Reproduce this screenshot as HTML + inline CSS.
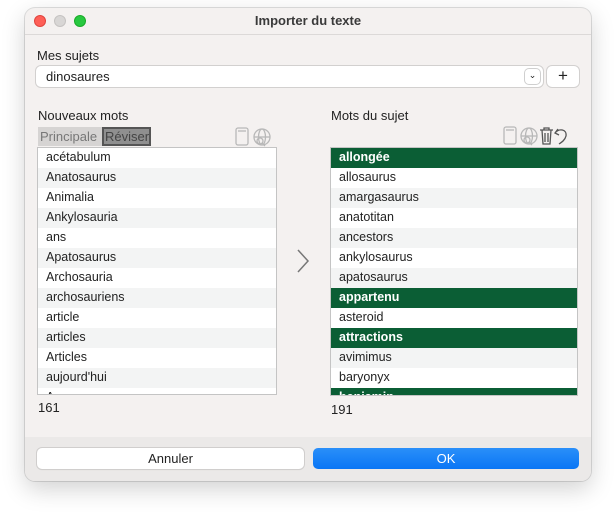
<!DOCTYPE html>
<html><head><meta charset="utf-8"><style>
*{box-sizing:border-box;margin:0;padding:0}
body{width:616px;height:524px;background:#fff;font-family:"Liberation Sans",sans-serif;font-size:12.5px;color:#222;position:relative;overflow:hidden}
.win{position:absolute;left:25px;top:8px;width:566px;height:473px;background:#f4f1f0;border-radius:10px;box-shadow:0 8px 24px rgba(0,0,0,.18),0 0 0 1px rgba(0,0,0,.12);overflow:hidden}
.title{position:absolute;left:0;top:0;width:100%;height:27px;border-bottom:1px solid #dcd9d8;text-align:center;line-height:25px;font-weight:bold;font-size:13px;color:#3a3a3a}
.dot{position:absolute;top:7px;width:12px;height:12px;border-radius:50%}
.abs{position:absolute}
.list{position:absolute;background:#fff;border:1px solid #c4c4c4;overflow:hidden}
.row{height:20px;line-height:19px;padding-left:8px;white-space:nowrap}
.g{background:#f3f4f4}
.s{background:#0b5e35;color:#fff;font-weight:bold}
.foot{position:absolute;left:0;top:429px;width:100%;height:44px;background:#ebe9e8}
.btn{position:absolute;top:11px;height:21px;border-radius:5px;text-align:center;line-height:21px;font-size:13px}
</style></head><body>
<div class="win">
 <div class="title">Importer du texte</div>
 <div class="dot" style="left:9px;background:#fe5f57;border:1px solid #e0443e"></div>
 <div class="dot" style="left:29px;background:#d8d6d5;border:1px solid #c5c3c2"></div>
 <div class="dot" style="left:49px;background:#28c840;border:1px solid #1aab29"></div>

 <div class="abs" style="left:12px;top:40px;font-size:13px">Mes sujets</div>
 <div class="abs" style="left:11px;top:58px;width:507px;height:21px;background:#fff;border-radius:5px;box-shadow:0 0 0 1px #d2d0cf;padding-left:10px;line-height:21px;font-size:13px">dinosaures
  <div class="abs" style="right:3px;top:3px;width:15px;height:15px;border-radius:4px;box-shadow:0 0 0 1px #cfcfcf;text-align:center;line-height:13px;font-size:9px">&#8964;</div></div>
 <div class="abs" style="left:522px;top:58px;width:32px;height:21px;background:#fff;border-radius:5px;box-shadow:0 0 0 1px #d2d0cf;text-align:center;line-height:20px;font-size:17px">+</div>

 <div class="abs" style="left:13px;top:100px;font-size:13px">Nouveaux mots</div>
 <div class="abs" style="left:13px;top:119px;width:113px;height:19px;background:#d6d4d3"></div>
 <div class="abs" style="left:15px;top:121px;color:#777;font-size:13px">Principale</div>
 <div class="abs" style="left:77px;top:119px;width:49px;height:19px;background:#8f8f8f;border:2px solid #555;color:#444;font-size:13px;line-height:15px;padding-left:1px">Réviser</div>
 <svg class="abs" style="left:209px;top:118px" width="40" height="22" fill="none" stroke="#b8b8b8" stroke-width="1.3"><rect x="2" y="2" width="12" height="17" rx="2"/><line x1="4" y1="5" x2="12" y2="5"/><circle cx="28" cy="11" r="8"/><ellipse cx="28" cy="11" rx="3.5" ry="8"/><line x1="20" y1="11" x2="36" y2="11"/><circle cx="26" cy="15" r="3"/><line x1="28" y1="17" x2="31" y2="20"/></svg>

 <div class="list" style="left:12px;top:139px;width:240px;height:248px">
  <div class="row">acétabulum</div><div class="row g">Anatosaurus</div><div class="row">Animalia</div><div class="row g">Ankylosauria</div><div class="row">ans</div><div class="row g">Apatosaurus</div><div class="row">Archosauria</div><div class="row g">archosauriens</div><div class="row">article</div><div class="row g">articles</div><div class="row">Articles</div><div class="row g">aujourd'hui</div><div class="row">Avec</div>
 </div>
 <div class="abs" style="left:13px;top:392px;font-size:13px">161</div>

 <svg class="abs" style="left:270px;top:240px" width="16" height="28" fill="none" stroke="#777" stroke-width="1.5"><path d="M3 2 L13 13 L3 24"/></svg>

 <div class="abs" style="left:306px;top:100px;font-size:13px">Mots du sujet</div>
 <svg class="abs" style="left:477px;top:117px" width="75" height="22" fill="none" stroke="#b8b8b8" stroke-width="1.3"><rect x="2" y="2" width="12" height="17" rx="2"/><line x1="4" y1="5" x2="12" y2="5"/><circle cx="27" cy="11" r="8"/><ellipse cx="27" cy="11" rx="3.5" ry="8"/><line x1="19" y1="11" x2="35" y2="11"/><circle cx="25" cy="15" r="3"/><line x1="27" y1="17" x2="30" y2="20"/><g stroke="#555"><path d="M38 5h13M42 5V3h5v2M40 5l1 14h7l1-14M43 8v9M46 8v9"/><path d="M56 4l-3 4 4 2M53 8c4-5 12-4 11 3-1 4-4 6-7 8"/></g></svg>
 <div class="list" style="left:305px;top:139px;width:248px;height:249px">
  <div class="row s">allongée</div><div class="row">allosaurus</div><div class="row g">amargasaurus</div><div class="row">anatotitan</div><div class="row g">ancestors</div><div class="row">ankylosaurus</div><div class="row g">apatosaurus</div><div class="row s">appartenu</div><div class="row">asteroid</div><div class="row s">attractions</div><div class="row g">avimimus</div><div class="row">baryonyx</div><div class="row s">benjamin</div>
 </div>
 <div class="abs" style="left:306px;top:394px;font-size:13px">191</div>

 <div class="foot">
  <div class="btn" style="left:12px;width:267px;background:#fff;box-shadow:0 0 0 1px #d0cecd,0 1px 1px rgba(0,0,0,.1)">Annuler</div>
  <div class="btn" style="left:288px;width:266px;background:linear-gradient(#2a8ff9,#0a76f5);color:#fff">OK</div>
 </div>
</div>
</body></html>
